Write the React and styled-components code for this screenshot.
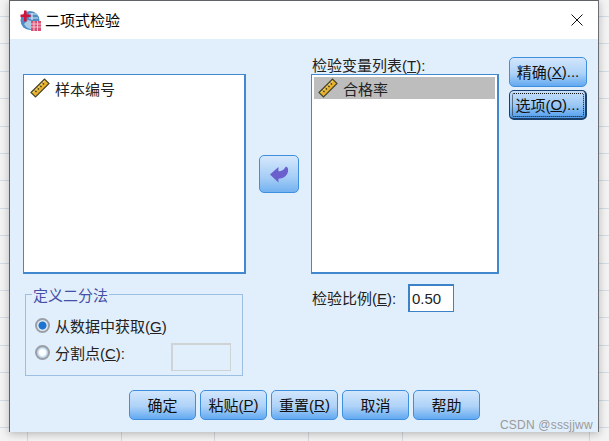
import React from 'react';
import styled, { createGlobalStyle } from 'styled-components';

const GlobalStyle = createGlobalStyle`
	html, body {
		margin: 0;
		padding: 0;
		height: 441px;
		overflow: hidden;
		font-family: "Liberation Sans", "Noto Sans CJK SC", sans-serif;
	}
`;

function RulerIcon () {
	return (
		<svg width="20" height="20" viewBox="0 0 20 20">
			<path d="M1 14.5 L14.5 1 L19 5.5 L5.5 19 Z" fill="#e8b32c" stroke="#4a4428" strokeWidth="1.2" />
			<path d="M4.5 12 L6.5 14 M7 9.5 L9 11.5 M9.5 7 L11.5 9 M12 4.5 L14 6.5" stroke="#3d3a22" strokeWidth="1.2" />
			<path d="M3 14.5 L14.5 3" stroke="#f7e08a" strokeWidth="1" />
		</svg>
	);
}

function WindowIcon () {
	return (
		<svg width="21" height="21" viewBox="0 0 21 21">
			<circle cx="10" cy="10.5" r="9.5" fill="#4d8cc4" />
			<path d="M4 14 A8 8 0 0 0 15 18 L15 12 L8 10 Z" fill="#a9cbe6" />
			<path d="M9 4 H17 M9 8 H18 M12 3 V10" stroke="#d5e6f4" strokeWidth="1.2" />
			<rect x="4" y="0.5" width="2.6" height="11" fill="#d3123c" />
			<rect x="0.5" y="4.5" width="10" height="2.6" fill="#d3123c" />
			<rect x="11" y="11" width="10" height="10" fill="#d84f72" />
			<path d="M11 14 H21 M11 17 H21 M14 11 V21 M17.5 11 V21" stroke="#f6c6d3" strokeWidth="1" />
		</svg>
	);
}

function ArrowIcon () {
	return (
		<svg width="19" height="17" viewBox="0 0 18 16">
			<path d="M0 8 L8 1 L8 5 C11 5 13 4 15 0.5 C17 1 17.5 3 17 5.5 C16 10 12 12 8 12 L8 15.5 Z" fill="#6a5fcc" />
		</svg>
	);
}

function CloseIcon () {
	return (
		<svg width="12" height="12" viewBox="0 0 12 12">
			<path d="M0.5 0.5 L11.5 11.5 M11.5 0.5 L0.5 11.5" stroke="#111" strokeWidth="1" fill="none" />
		</svg>
	);
}

function App () {
	return (
		<Desktop>
			<GlobalStyle />
			<Dialog>
				<TitleBar>
					<WindowIcon />
					<Title>二项式检验</Title>
					<CloseBtn><CloseIcon /></CloseBtn>
				</TitleBar>
				<Body>
					<Main>
						<LeftColumn>
							<VarList>
								<VarRow><RulerIcon />样本编号</VarRow>
							</VarList>
							<GroupBox>
								<Legend>定义二分法</Legend>
								<RadioRow>
									<Radio checked />
									<span>从数据中获取(<u>G</u>)</span>
								</RadioRow>
								<RadioRow>
									<Radio />
									<span>分割点(<u>C</u>):</span>
									<CutInput />
								</RadioRow>
							</GroupBox>
						</LeftColumn>
						<MiddleColumn>
							<ArrowBtn><ArrowIcon /></ArrowBtn>
						</MiddleColumn>
						<RightColumn>
							<FieldLabel>检验变量列表(<u>T</u>):</FieldLabel>
							<VarList>
								<VarRow selected><RulerIcon />合格率</VarRow>
							</VarList>
							<RatioRow>
								<FieldLabel>检验比例(<u>E</u>):</FieldLabel>
								<RatioInput>0.50</RatioInput>
							</RatioRow>
						</RightColumn>
						<SideButtons>
							<SideBtn>精确(<u>X</u>)...</SideBtn>
							<SideBtn focused>选项(<u>O</u>)...</SideBtn>
						</SideButtons>
					</Main>
					<Footer>
						<Btn>确定</Btn>
						<Btn>粘贴(<u>P</u>)</Btn>
						<Btn>重置(<u>R</u>)</Btn>
						<Btn>取消</Btn>
						<Btn>帮助</Btn>
					</Footer>
				</Body>
				<Watermark>CSDN @sssjjww</Watermark>
			</Dialog>
		</Desktop>
	);
}

export default App;

const Desktop = styled.div`
	position: relative;
	width: 609px;
	height: 441px;
	overflow: hidden;
	background-color: #f3f3f3;
	background-image:
		repeating-linear-gradient(to bottom, transparent 0 16px, #d2dbe6 16px 17px, transparent 17px 27.4px),
		repeating-linear-gradient(to right, transparent 0 27px, #d4d8dd 27px 28px, transparent 28px 93.7px);
`;

const Dialog = styled.div`
	position: absolute;
	left: 9px;
	top: 0;
	width: 590px;
	height: 432px;
	box-sizing: border-box;
	display: flex;
	flex-direction: column;
	border: 1px solid #5f6368;
	border-bottom: none;
	border-right: 1px solid #6b6f74;
	background: #e1eefb;
	box-shadow: 0 2px 8px rgba(0, 0, 0, 0.25);
`;

const TitleBar = styled.div`
	display: flex;
	align-items: center;
	flex: none;
	height: 38px;
	padding: 0 0 0 10px;
	background: #fff;
`;

const Title = styled.div`
	margin: -2px 0 0 4px;
	font-size: 15px;
	color: #000;
`;

const CloseBtn = styled.div`
	display: flex;
	margin-left: auto;
	margin-right: 15px;
`;

const Body = styled.div`
	display: flex;
	flex-direction: column;
	flex: 1;
	padding: 18px 0 12px 13px;
`;

const Main = styled.div`
	display: flex;
	align-items: flex-start;
	flex: 1;
`;

const LeftColumn = styled.div`
	display: flex;
	flex-direction: column;
	width: 223px;
	padding-top: 17px;
`;

const VarList = styled.div`
	box-sizing: border-box;
	width: 100%;
	height: 200px;
	padding: 2px;
	background: #fff;
	border: 2px solid #4288cf;
	border-width: 1px 2px 2px 1px;
`;

const VarRow = styled.div`
	display: flex;
	align-items: center;
	gap: 5px;
	height: 22px;
	padding-left: 4px;
	font-size: 15px;
	color: #222;
	background: ${(props) => (props.selected ? '#bdbdbd' : 'transparent')};
`;

const GroupBox = styled.fieldset`
	position: relative;
	box-sizing: border-box;
	width: 218px;
	height: 82px;
	margin: 20px 0 0 2px;
	padding: 17px 0 0 9px;
	border: 1px solid #9dc0e2;
`;

const Legend = styled.div`
	position: absolute;
	top: -7px;
	left: 6px;
	padding: 0 1px;
	font-size: 15px;
	line-height: 15px;
	color: #4450a8;
	background: #e1eefb;
`;

const RadioRow = styled.div`
	display: flex;
	align-items: center;
	gap: 5px;
	height: 27px;
	font-size: 15px;
	color: #222;
`;

const Radio = styled.span`
	box-sizing: border-box;
	width: 15px;
	height: 15px;
	border-radius: 50%;
	border: 2px solid #9a9fa6;
	background: ${(props) => (props.checked ? 'radial-gradient(circle, #1f73d0 0 3.5px, #dfeaf6 4.5px)' : 'radial-gradient(circle, #fdfefe 0 3px, #b9d3ec 5px)')};
`;

const CutInput = styled.div`
	box-sizing: border-box;
	width: 60px;
	height: 28px;
	margin-left: auto;
	margin-right: 11px;
	margin-top: 8px;
	border: 1px solid #cfd3d6;
	border-width: 2px 1px 1px 2px;
	background: #e1eefb;
`;

const MiddleColumn = styled.div`
	display: flex;
	width: 65px;
	padding: 98px 0 0 13px;
	box-sizing: border-box;
`;

const ArrowBtn = styled.div`
	display: flex;
	align-items: center;
	justify-content: center;
	box-sizing: border-box;
	width: 40px;
	height: 38px;
	border: 1px solid #3f8fdf;
	border-radius: 5px;
	background: linear-gradient(#d5e8fc, #a5cdf6 60%, #74b2f1);
`;

const RightColumn = styled.div`
	display: flex;
	flex-direction: column;
	width: 188px;
`;

const FieldLabel = styled.div`
	height: 17px;
	padding-left: 1px;
	font-size: 15px;
	line-height: 17px;
	color: #222;
	white-space: nowrap;
`;

const RatioRow = styled.div`
	display: flex;
	align-items: center;
	justify-content: space-between;
	width: 143px;
	margin-top: 10px;
`;

const RatioInput = styled.div`
	box-sizing: border-box;
	width: 46px;
	height: 28px;
	padding-left: 2px;
	font-size: 15px;
	line-height: 26px;
	color: #222;
	background: #fff;
	border: 1px solid #3b82c8;
	border-width: 2px 1px 1px 2px;
`;

const SideButtons = styled.div`
	display: flex;
	flex-direction: column;
	gap: 3px;
	width: 78px;
	margin-left: 10px;
`;

const Btn = styled.div`
	display: flex;
	align-items: center;
	justify-content: center;
	box-sizing: border-box;
	flex: 1;
	height: 30px;
	padding-bottom: 1px;
	font-size: 15px;
	color: #111;
	white-space: nowrap;
	border: 1px solid ${(props) => (props.focused ? '#1b3f6b' : '#3f8fdf')};
	border-width: ${(props) => (props.focused ? '1px 2px 2px 1px' : '1px')};
	border-radius: 5px;
	background: ${(props) => (props.focused
		? 'linear-gradient(#c6e0fb, #98c6f5 55%, #4f9ceb)'
		: 'linear-gradient(#d2e6fc, #aed2f8 55%, #62a9f0)')};
	outline: ${(props) => (props.focused ? '1px dotted #111' : 'none')};
	outline-offset: ${(props) => (props.focused ? '-4px' : '0')};
`;

const SideBtn = styled(Btn)`
	flex: none;
`;

const Footer = styled.div`
	display: flex;
	gap: 4px;
	flex: none;
	width: 351px;
	margin-left: 106px;
`;

const Watermark = styled.div`
	position: absolute;
	left: 490px;
	top: 417px;
	font-size: 12px;
	line-height: 14px;
	letter-spacing: 0.2px;
	color: #9a9a9a;
	white-space: nowrap;
`;
